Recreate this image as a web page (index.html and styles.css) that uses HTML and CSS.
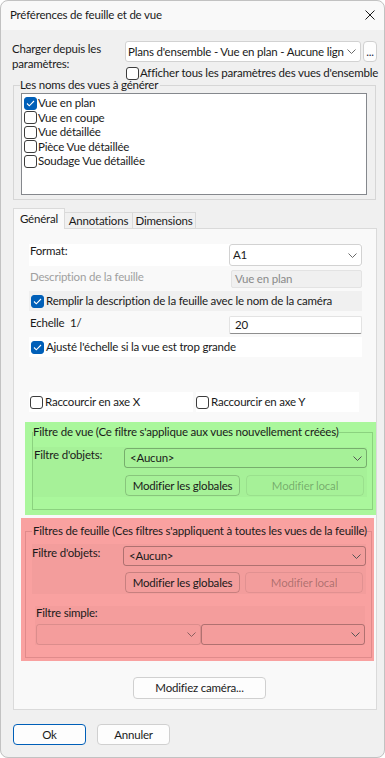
FILE: index.html
```html
<!DOCTYPE html>
<html lang="fr">
<head>
  <meta charset="UTF-8">
  <title>Préférences de feuille et de vue</title>
  <link rel="stylesheet" href="styles.css">
</head>
<body>
  <div class="window">
    <!-- Title bar -->
    <div class="titlebar">
      <span>Préférences de feuille et de vue</span>
      <svg class="close" width="10" height="10" viewBox="0 0 10 10"><path d="M.5.5l9 9M9.5.5l-9 9" stroke="#1b1b1b" stroke-width="1"/></svg>
    </div>

    <div class="content">
      <!-- Load from settings -->
      <div class="load">
        <div class="load-label">Charger depuis les<br>paramètres:</div>
        <div class="combo">
          <span class="combo-text">Plans d'ensemble - Vue en plan - Aucune lign</span>
          <svg class="chev" width="9" height="5" viewBox="0 0 9 5"><path d="M.5.5l4 4 4-4" fill="none" stroke="#6a6a6a"/></svg>
        </div>
        <button class="btn dots">...</button>
        <div class="chk-row show-all"><span class="check"></span>Afficher tous les paramètres des vues d'ensemble</div>
      </div>

      <!-- Views to generate -->
      <fieldset class="group views">
        <legend>Les noms des vues à générer</legend>
        <div class="listbox">
          <div class="chk-row list-item"><span class="check on"><svg width="9" height="7" viewBox="0 0 9 7"><path d="M1 3.5l2.3 2.3L8 1" fill="none" stroke="#fff" stroke-width="1.1"/></svg></span>Vue en plan</div>
          <div class="chk-row list-item"><span class="check"></span>Vue en coupe</div>
          <div class="chk-row list-item"><span class="check"></span>Vue détaillée</div>
          <div class="chk-row list-item"><span class="check"></span>Pièce Vue détaillée</div>
          <div class="chk-row list-item"><span class="check"></span>Soudage Vue détaillée</div>
        </div>
      </fieldset>

      <!-- Tabs -->
      <div class="tabs">
        <div class="tab active tab-general">Général</div>
        <div class="tab tab-annot">Annotations</div>
        <div class="tab tab-dim">Dimensions</div>
      </div>

      <div class="panel">
        <div class="row format-row">
          <div class="row-label">Format:</div>
          <div class="combo a1">
            <span class="combo-text">A1</span>
            <svg class="chev" width="9" height="5" viewBox="0 0 9 5"><path d="M.5.5l4 4 4-4" fill="none" stroke="#6a6a6a"/></svg>
          </div>
        </div>

        <div class="row desc-row">
          <div class="row-label muted">Description de la feuille</div>
          <div class="textbox disabled">Vue en plan</div>
        </div>

        <div class="row fill-row chk-row">
          <span class="check on"><svg width="9" height="7" viewBox="0 0 9 7"><path d="M1 3.5l2.3 2.3L8 1" fill="none" stroke="#fff" stroke-width="1.1"/></svg></span>Remplir la description de la feuille avec le nom de la caméra
        </div>

        <div class="row scale-row">
          <div class="row-label">Echelle &nbsp;1/</div>
          <div class="textbox scale">20</div>
        </div>

        <div class="row fit-row chk-row">
          <span class="check on"><svg width="9" height="7" viewBox="0 0 9 7"><path d="M1 3.5l2.3 2.3L8 1" fill="none" stroke="#fff" stroke-width="1.1"/></svg></span>Ajusté l'échelle si la vue est trop grande
        </div>

        <div class="row short-row">
          <div class="chk-row short-x"><span class="check"></span>Raccourcir en axe X</div>
          <div class="chk-row short-y"><span class="check"></span>Raccourcir en axe Y</div>
        </div>

        <!-- View filter -->
        <div class="filter-green">
          <fieldset class="group green-group">
            <legend>Filtre de vue (Ce filtre s'applique aux vues nouvellement créées)</legend>
            <div class="sub">
              <div class="sub-label">Filtre d'objets:</div>
              <div class="combo tint">
                <span class="combo-text">&lt;Aucun&gt;</span>
                <svg class="chev" width="9" height="5" viewBox="0 0 9 5"><path d="M.5.5l4 4 4-4" fill="none" stroke="#555"/></svg>
              </div>
              <div class="sub-buttons">
                <button class="btn tint-btn">Modifier les globales</button>
                <button class="btn tint-btn off">Modifier local</button>
              </div>
            </div>
          </fieldset>
        </div>

        <!-- Sheet filters -->
        <div class="filter-red">
          <fieldset class="group red-group">
            <legend>Filtres de feuille (Ces filtres s'appliquent à toutes les vues de la feuille)</legend>
            <div class="sub">
              <div class="sub-label">Filtre d'objets:</div>
              <div class="combo tint">
                <span class="combo-text">&lt;Aucun&gt;</span>
                <svg class="chev" width="9" height="5" viewBox="0 0 9 5"><path d="M.5.5l4 4 4-4" fill="none" stroke="#555"/></svg>
              </div>
              <div class="sub-buttons">
                <button class="btn tint-btn">Modifier les globales</button>
                <button class="btn tint-btn off">Modifier local</button>
              </div>
            </div>
            <div class="simple">
              <div class="simple-label">Filtre simple:</div>
              <div class="simple-combos">
                <div class="combo tint off"><span class="combo-text"></span><svg class="chev" width="9" height="5" viewBox="0 0 9 5"><path d="M.5.5l4 4 4-4" fill="none" stroke="#8a5f5f"/></svg></div>
                <div class="combo tint"><span class="combo-text"></span><svg class="chev" width="9" height="5" viewBox="0 0 9 5"><path d="M.5.5l4 4 4-4" fill="none" stroke="#555"/></svg></div>
              </div>
            </div>
          </fieldset>
        </div>

        <button class="btn camera">Modifiez caméra...</button>
      </div>

      <!-- Dialog buttons -->
      <div class="footer">
        <button class="btn ok">Ok</button>
        <button class="btn cancel">Annuler</button>
      </div>
    </div>
  </div>
</body>
</html>
```

FILE: styles.css
```css
/* Reset & Base */
* {
  box-sizing: border-box;
  margin: 0;
  padding: 0;
}

html,
body {
  background: #fff;
}

body {
  font-family: "Segoe UI", Lato, sans-serif;
  font-size: 11.5px;
  letter-spacing: -0.2px;
  line-height: 14px;
  color: #1a1a1a;
}

button {
  font: inherit;
  letter-spacing: inherit;
  color: inherit;
}

/* Window */
.window {
  width: 385px;
  height: 758px;
  background: #f0f0f0;
  border-radius: 8px;
  outline: 1px solid #c2c2c2;
  outline-offset: -1px;
  overflow: hidden;
}

.titlebar {
  height: 30px;
  background: #f9f9f9;
  display: flex;
  align-items: center;
  justify-content: space-between;
  padding: 0 10px;
}

.content {
  padding: 11px 0 0 12px;
}

/* Shared controls */
.combo {
  height: 21px;
  background: #fff;
  border: 1px solid #d2d2d2;
  border-radius: 3px;
  display: flex;
  align-items: center;
  padding: 0 4px 0 2px;
}

.combo-text {
  flex: 1;
  overflow: hidden;
  white-space: nowrap;
}

.chev {
  flex: none;
  margin-left: 3px;
}

.btn {
  height: 21px;
  background: #fdfdfd;
  border: 1px solid #d0d0d0;
  border-radius: 4px;
  text-align: center;
  line-height: 14px;
}

.chk-row {
  display: flex;
  align-items: center;
  gap: 1px;
  white-space: nowrap;
}

.check {
  width: 13px;
  height: 13px;
  flex: none;
  border: 1px solid #3c3c3c;
  border-radius: 3px;
  background: #fff;
  display: inline-flex;
  align-items: center;
  justify-content: center;
}

.check.on {
  background: #005fb8;
  border-color: #005fb8;
}

/* Load row */
.load {
  display: grid;
  grid-template-columns: 111px 236px 14px;
  column-gap: 2px;
}

.load-label {
  grid-row: 1 / 3;
  line-height: 15px;
}

.dots {
  width: 14px;
  padding: 0;
  color: #1f2a44;
}

.show-all {
  grid-column: 2 / 4;
  margin: 4px 0 0 1px;
}

/* Group boxes */
.group {
  border: 1px solid #d6d6d6;
  min-width: 0;
}

.group legend {
  line-height: 14px;
  white-space: nowrap;
}

.views {
  width: 363px;
  margin: -2px 0 0 1px;
  padding: 1px 8px 4px 7px;
}

.views legend {
  margin-left: -1px;
  padding-right: 2px;
}

.listbox {
  height: 102px;
  background: #fff;
  border: 1px solid #85888d;
  padding: 2px 0 0 2px;
}

.list-item {
  height: 14.5px;
}

/* Tabs */
.tabs {
  display: flex;
  align-items: flex-end;
  height: 20px;
  margin: 8px 0 0 1px;
}

.tab {
  height: 16px;
  border: 1px solid #dadada;
  border-bottom: none;
  background: #f0f0f0;
  text-align: center;
  padding-top: 1px;
  margin-left: -1px;
}

.tab.active {
  height: 21px;
  margin-left: 0;
  margin-bottom: -1px;
  padding-top: 3px;
  background: #f9f9f9;
  position: relative;
  z-index: 1;
}

.tab-general {
  width: 52px;
}

.tab-annot {
  width: 69px;
}

.tab-dim {
  width: 64px;
}

.panel {
  width: 364px;
  height: 482px;
  margin-left: 1px;
  border: 1px solid #dadada;
  background: #f9f9f9;
  padding-top: 15px;
}

/* Panel rows */
.row {
  display: flex;
  width: 333px;
  margin-left: 15px;
}

.row-label {
  flex: 1;
  padding-left: 1px;
}

.muted {
  color: #a0a0a0;
}

.format-row {
  height: 22px;
  background: #fff;
}

.combo.a1 {
  width: 133px;
  height: 22px;
  padding-left: 3px;
}

.desc-row {
  height: 18px;
  margin-top: 4px;
}

.textbox {
  height: 18px;
  line-height: 16px;
  border: 1px solid #e3e3e3;
  border-radius: 2px;
}

.textbox.disabled {
  width: 131px;
  background: #f0f0f0;
  color: #8a8a8a;
  padding-left: 3px;
}

.fill-row {
  height: 20px;
  margin-top: 3px;
  background: #f0f0f0;
  padding-left: 2px;
  gap: 2px;
}

.scale-row {
  height: 18px;
  margin-top: 5px;
}

.textbox.scale {
  width: 133px;
  background: #fff;
  border-bottom-color: #8e8e8e;
  padding-left: 5px;
}

.fit-row {
  height: 20px;
  margin-top: 3px;
  background: #fff;
  padding-left: 2px;
  gap: 2px;
}

.short-row {
  height: 20px;
  margin-top: 35px;
  gap: 3px;
}

.short-row .chk-row {
  background: #fff;
  gap: 2px;
}

.short-x {
  width: 164px;
  padding-left: 1px;
}

.short-y {
  width: 163px;
}

/* Coloured filter zones */
.filter-green {
  width: 351px;
  height: 93px;
  margin: 10px 0 0 11px;
  padding: 3px 0 0 7px;
  background: #aaf79c;
}

.green-group {
  width: 341px;
  border-color: #8bd27f;
  padding: 0 0 12px 0;
}

.filter-red {
  width: 353px;
  height: 143px;
  margin: 3px 0 0 7px;
  padding: 6px 0 0 4px;
  background: #f9a1a0;
}

.red-group {
  width: 347px;
  border-color: #e08b8b;
  padding: 0 0 12px 6px;
}

.red-group legend {
  padding-left: 1px;
}

.sub {
  display: grid;
  grid-template-columns: 91px 243px;
  row-gap: 6px;
  width: 334px;
  margin-top: 8px;
  padding: 1px 0 1px;
  background: rgba(0, 0, 0, 0.025);
}

.green-group .sub {
  row-gap: 7px;
}

.green-group .sub-label {
  padding-left: 1px;
}

.red-group .sub {
  margin-top: 6px;
  padding-top: 2px;
}

.combo.tint {
  height: 20px;
  background: transparent;
  border-color: rgba(0, 0, 0, 0.28);
  padding-left: 5px;
}

.combo.tint.off {
  border-color: rgba(0, 0, 0, 0.1);
}

.sub-buttons {
  grid-column: 2;
  display: flex;
  gap: 6px;
  margin-left: 1px;
}

.red-group .sub-buttons {
  margin-left: 2px;
  gap: 5px;
}

.tint-btn {
  width: 115px;
  background: transparent;
  border-color: rgba(0, 0, 0, 0.18);
}

.tint-btn.off {
  width: 118px;
  border-color: rgba(0, 0, 0, 0.07);
  color: rgba(0, 0, 0, 0.3);
}

.simple {
  width: 330px;
  height: 39px;
  margin: 12px 0 0 3px;
  background: rgba(0, 0, 0, 0.02);
}

.simple-label {
  padding-left: 1px;
}

.simple-combos {
  display: flex;
  margin: 4px 0 0 1px;
}

.simple-combos .combo {
  width: 165px;
  height: 21px;
}

/* Buttons */
.camera {
  display: block;
  width: 133px;
  height: 22px;
  margin: 16px 0 0 119px;
}

.footer {
  display: flex;
  gap: 11px;
  margin: 14px 0 0 1px;
}

.footer .btn {
  width: 73px;
}

.btn.ok {
  border-color: #005fb8;
}
```
